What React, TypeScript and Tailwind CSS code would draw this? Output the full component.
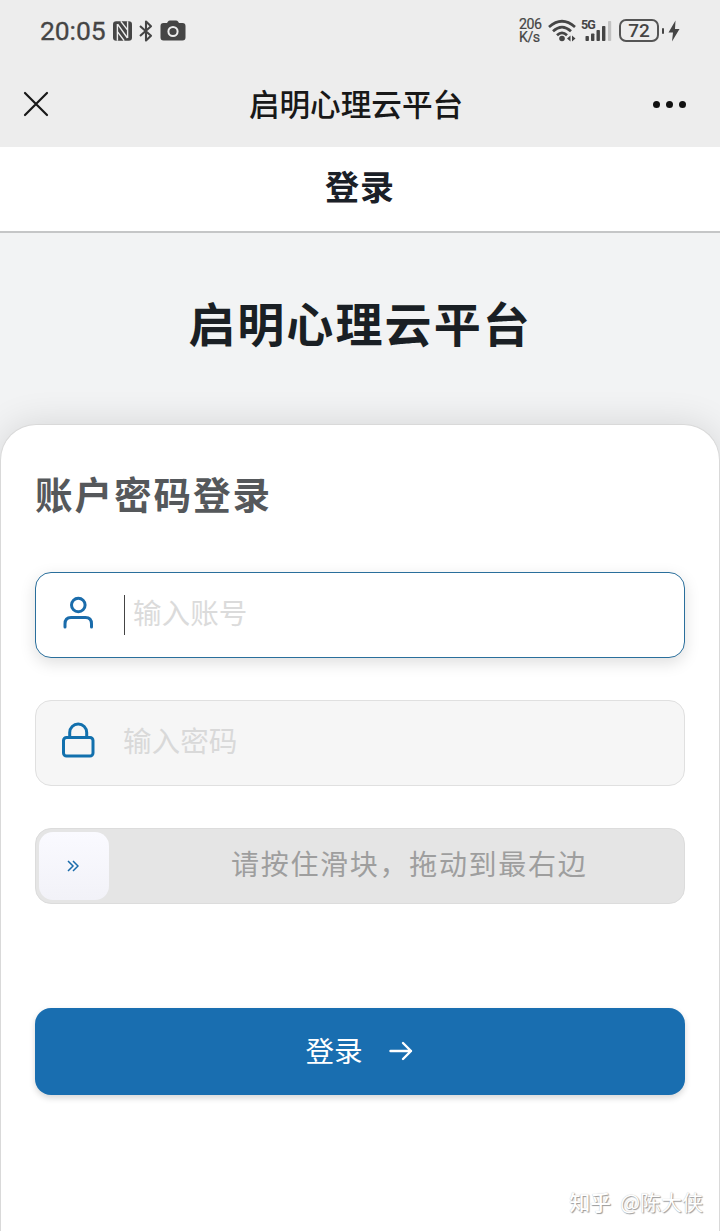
import React, { useState } from 'react';

function StatusBar() {
  return (
    <div className="flex h-[61px] items-center justify-between pl-10 pr-10 text-[#454545]">
      <div className="flex items-center">
        <span className="w-[66px] whitespace-nowrap pt-px font-['Roboto',sans-serif] text-[26.5px] leading-none tracking-[-0.1px] [-webkit-text-stroke:0.3px_#454545]">20:05</span>
        {/* NFC */}
        <svg className="ml-[7px] h-5 w-[19px]" viewBox="0 0 19 20">
          <rect x="0" y="0.3" width="19" height="19.4" rx="3.2" fill="currentColor" />
          <path d="M4.4 3V19.7M14.6 0.3V17M4.6 3.2L14.4 17M7.8 0.3L14.6 9.2M4.4 10.6L11.2 19.7" fill="none" stroke="#ededed" strokeWidth="1.4" />
        </svg>
        {/* Bluetooth */}
        <svg className="ml-[7px] h-[22px] w-[14px]" viewBox="0 0 14 22" fill="none" stroke="currentColor" strokeWidth="2.1" strokeLinejoin="round">
          <path d="M1 6L12 15.7L7 20.5V1.5L12 6.2L1 16" />
        </svg>
        <svg className="ml-[7px] h-[22px] w-[26px]" viewBox="0 0 26 22">
          <path d="M8 1.5Q8.6 0.5 10 0.5H16Q17.4 0.5 18 1.5L19 3H22.5Q25.5 3 25.5 6V17.5Q25.5 20.5 22.5 20.5H3.5Q0.5 20.5 0.5 17.5V6Q0.5 3 3.5 3H7Z" fill="currentColor" />
          <circle cx="13" cy="11.5" r="4.6" fill="none" stroke="#ededed" strokeWidth="2" />
        </svg>
      </div>

      <div className="flex items-center">
        <div className="w-[25px] whitespace-pre-line font-['Roboto',sans-serif] text-[14.2px] leading-[13px] tracking-[-0.5px] [-webkit-text-stroke:0.2px_#454545]">
          {'206\nK/s'}
        </div>
        <svg className="ml-1 h-6 w-7" viewBox="0 0 28 24" fill="none" stroke="currentColor" strokeWidth="2.7">
          <path d="M1 8Q14 -3.5 27 8" />
          <path d="M5 12.3Q14 4 23 12.3" />
          <path d="M9 16.2Q14 11.5 19 16.2" />
          <circle cx="14" cy="19.5" r="2.8" fill="currentColor" stroke="none" />
          <path d="M22.5 16.5V22.5L19 19.5ZM24 16.5V22.5L27.5 19.5Z" fill="currentColor" stroke="none" />
        </svg>
        <div className="relative ml-[5px] h-6 w-[31px]">
          <span className="absolute -top-px left-0 font-['Roboto',sans-serif] text-[12.5px] leading-[14px] font-bold tracking-[-0.8px]">5G</span>
          <svg className="h-6 w-[31px]" viewBox="0 0 31 24" fill="currentColor">
            <rect x="4.5" y="17" width="3.4" height="5" rx="0.8" />
            <rect x="10" y="14.5" width="3.4" height="7.5" rx="0.8" />
            <rect x="15.5" y="11" width="3.4" height="11" rx="0.8" />
            <rect x="21" y="7" width="3.4" height="15" rx="0.8" />
            <rect x="27" y="2" width="3.2" height="20" rx="0.8" fill="#c2c2c2" />
          </svg>
        </div>
        <div className="ml-[7px] flex h-[23px] w-[40px] items-center justify-center rounded-[7px] border-2 border-[#555] font-['Roboto',sans-serif] text-[19px] leading-none font-medium">
          72
        </div>
        <div className="ml-[3px] h-1.5 w-[2px] rounded-sm bg-[#454545]" />
        <svg className="ml-1 h-[22px] w-3" viewBox="0 0 12 22" fill="currentColor">
          <path d="M7.5 0.5L0.5 12.5H5L4 21.5L11.5 9H7Z" />
        </svg>
      </div>
    </div>
  );
}

function NavBar() {
  return (
    <div className="grid h-[86px] grid-cols-[1fr_auto_1fr] items-center pl-[23px] pr-[34px]">
      <button aria-label="关闭">
        <svg className="h-[26px] w-[26px]" viewBox="0 0 26 26" fill="none" stroke="#181818" strokeWidth="2.2" strokeLinecap="round">
          <path d="M2 2L24 24M24 2L2 24" />
        </svg>
      </button>
      <h1 className="pb-0.5 pl-[3px] text-[30.6px] leading-none font-medium text-[#181818]">启明心理云平台</h1>
      <button aria-label="更多" className="flex justify-end gap-[6px]">
        <i className="size-[7px] rounded-full bg-[#111]" />
        <i className="size-[7px] rounded-full bg-[#111]" />
        <i className="size-[7px] rounded-full bg-[#111]" />
      </button>
    </div>
  );
}

export default function App() {
  const [account, setAccount] = useState('');
  const [password, setPassword] = useState('');

  return (
    <div className="flex h-[1231px] w-[720px] flex-col overflow-hidden bg-[#f2f3f4] font-['Noto_Sans_CJK_SC',sans-serif]">
      <div className="bg-[#ededed]">
        <StatusBar />
        <NavBar />
      </div>

      <div className="flex h-[86px] items-center justify-center border-b-2 border-[#c5c6c7] bg-white pb-1.5">
        <h2 className="text-[34px] leading-none font-bold tracking-[1px] text-[#1b2027]">登录</h2>
      </div>

      <div className="flex h-[191px] items-center justify-center pb-3.5">
        <div className="text-[47px] leading-none font-bold tracking-[2.1px] text-[#1a1f24]">启明心理云平台</div>
      </div>

      {/* Login card */}
      <div className="relative flex-1 rounded-t-[36px] border border-b-0 border-[#d9d9d9] bg-white px-[34px] pt-[45px] shadow-[0_0_36px_rgba(0,0,0,0.12)]">
        <h3 className="text-[37.6px] leading-[46px] font-bold tracking-[1.9px] text-[#55585b]">账户密码登录</h3>

        <label className="mt-[56px] flex h-[86px] items-center rounded-2xl border-[1.5px] border-[#2a6f9c] bg-white shadow-[0_5px_16px_rgba(0,0,0,0.13)]">
          <svg className="mb-1 ml-[26px] h-[34px] w-8" viewBox="0 0 32 34" fill="none" stroke="#1a6cab" strokeWidth="3" strokeLinecap="round">
            <circle cx="16.3" cy="9" r="6.8" />
            <path d="M3 31V28Q3 21.5 9 21.5H23.5Q29.5 21.5 29.5 28V31" />
          </svg>
          <span className="ml-[30px] h-10 w-px bg-[#444]" />
          <input
            value={account}
            onChange={(e) => setAccount(e.target.value)}
            placeholder="输入账号"
            className="mb-[7px] ml-[8px] h-12 min-w-0 flex-1 bg-transparent text-[28.6px] outline-none placeholder:text-[#dbdbdb]"
          />
        </label>

        <label className="mt-[42px] flex h-[86px] items-center rounded-2xl border-[1.5px] border-[#e0e0e0] bg-[#f6f6f6]">
          <svg className="mb-1.5 ml-[25px] h-9 w-[34px]" viewBox="0 0 34 36" fill="none" stroke="#1270ad" strokeWidth="3">
            <rect x="2.5" y="15.5" width="29.5" height="18.5" rx="3" />
            <path d="M8.7 15.5V10.5A8.5 8.5 0 0 1 25.7 10.5V15.5" />
          </svg>
          <input
            type="text"
            value={password}
            onChange={(e) => setPassword(e.target.value)}
            placeholder="输入密码"
            className="mb-[8px] ml-[28px] h-12 min-w-0 flex-1 bg-transparent text-[28.6px] outline-none placeholder:text-[#d9d9d9]"
          />
        </label>

        {/* Slide to verify */}
        <div className="mt-[42px] flex h-[76px] items-center rounded-2xl border-[1.5px] border-[#dcdcdc] bg-[#e5e5e5] pl-[3px]">
          <button aria-label="滑块" className="flex h-[68px] w-[70px] items-center justify-center rounded-[14px] bg-gradient-to-b from-[#fafaff] to-[#f2f2f8] pr-0.5">
            <svg className="h-3 w-3" viewBox="0 0 12 12" fill="none" stroke="#1a6cab" strokeWidth="1.5">
              <path d="M1 1L6 6L1 11M6 1L11 6L6 11" />
            </svg>
          </button>
          <span className="ml-[122px] pb-[6px] text-[28px] leading-none tracking-[1.7px] whitespace-nowrap text-[#9e9e9e]">请按住滑块，拖动到最右边</span>
        </div>

        <button className="mt-[104px] flex h-[87px] w-full items-center justify-center rounded-2xl bg-[#196eb0] pr-0.5 pb-0.5 text-[28.6px] leading-none text-white shadow-[0_3px_6px_rgba(0,0,0,0.16)]">
          登录
          <svg className="ml-[26px] h-5 w-6" viewBox="0 0 24 20" fill="none" stroke="currentColor" strokeWidth="2.4" strokeLinecap="round" strokeLinejoin="round">
            <path d="M1.5 10H22M14 2L22 10L14 18" />
          </svg>
        </button>

        <div className="absolute right-4 bottom-[19px] flex gap-[9px] text-[21px] leading-none whitespace-nowrap text-white [text-shadow:1px_1px_1px_#999,0_0_1px_#bbb]">
          <span className="font-medium">知乎</span>
          <span>@陈大侠</span>
        </div>
      </div>
    </div>
  );
}
